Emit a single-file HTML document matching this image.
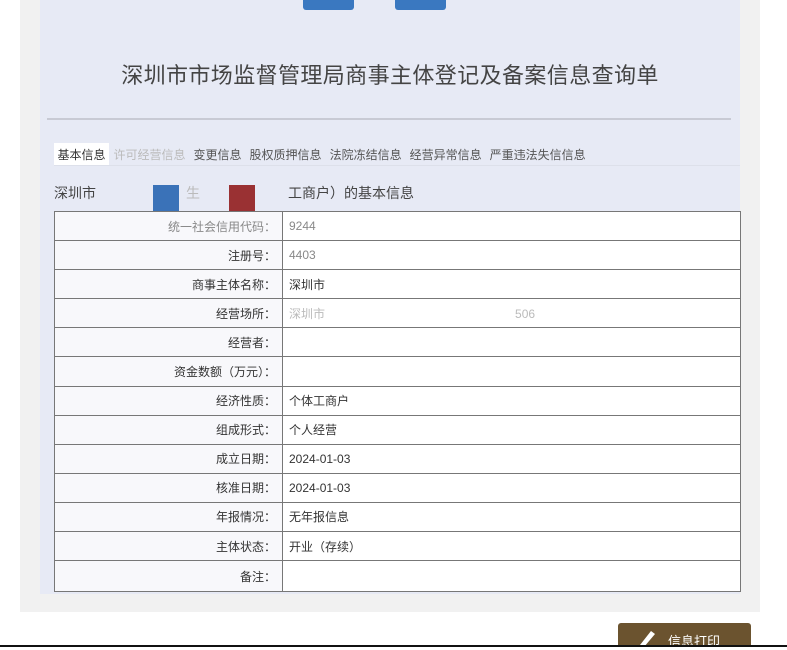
<!DOCTYPE html>
<html><head><meta charset="utf-8"><style>
*{margin:0;padding:0;box-sizing:border-box}
body{width:787px;height:647px;background:#fff;position:relative;overflow:hidden;font-family:"Liberation Sans","Noto Sans CJK SC",sans-serif;color:#333}
.outer{position:absolute;left:20px;top:0;width:740px;height:612px;background:#f1f1f1}
.inner{position:absolute;left:40px;top:0;width:700px;height:594px;background:#e7eaf5}
.btn{position:absolute;top:0;height:10px;width:51px;background:#3a78c0;border-radius:0 0 3px 3px}
.title{position:absolute;left:40px;width:700px;top:58px;text-align:center;font-size:22px;color:#444;letter-spacing:0.4px}
.hr{position:absolute;left:47px;top:118px;width:684px;height:2px;background:#c8cad4}
.tabs{position:absolute;left:54px;top:143px;font-size:12px;color:#555;white-space:nowrap}
.tabs span{display:inline-block;padding:3px 3.5px;margin-right:1px}
.tabs span.a{background:#fff;color:#333}
.tabline{position:absolute;left:54px;top:165px;width:686px;height:1px;background:#dde0ea}
.sub{position:absolute;left:54px;top:183px;font-size:14px;color:#444;white-space:nowrap}
.sq{position:absolute;top:2px;width:26px;height:26px}
table{position:absolute;left:54px;top:211px;width:687px;border-collapse:collapse;background:#fff;font-size:12px}
td{border:1px solid #777;height:29.1px;padding:0 6px}
td.l{width:228px;text-align:right;background:#f8f8fb}
.pb{position:absolute;left:618px;top:623px;width:133px;height:24px;background:#6b532f;border-radius:3px 3px 0 0;color:#fff;font-size:13px;padding:8px 0 0 50px}
.bl{position:absolute;left:0;top:645px;width:787px;height:2px;background:#111}
</style></head><body>
<div class="outer"></div>
<div class="inner"></div>
<div class="btn" style="left:303px"></div>
<div class="btn" style="left:395px"></div>
<div class="title">深圳市市场监督管理局商事主体登记及备案信息查询单</div>
<div class="hr"></div>
<div class="tabs"><span class="a">基本信息</span><span style="color:#bbb">许可经营信息</span><span>变更信息</span><span>股权质押信息</span><span>法院冻结信息</span><span>经营异常信息</span><span>严重违法失信信息</span></div>
<div class="tabline"></div>
<div class="sub" style="width:400px;height:30px">深圳市
<span class="sq" style="left:99px;background:#3a72b8"></span>
<span style="position:absolute;left:132px;top:0;color:#bbb">生</span>
<span class="sq" style="left:175px;background:#9a3133"></span>
<span style="position:absolute;left:234px;top:0">工商户）的基本信息</span></div>
<table>
<tr><td class="l" style="color:#888">统一社会信用代码：</td><td style="color:#888">9244</td></tr>
<tr><td class="l">注册号：</td><td style="color:#888">4403</td></tr>
<tr><td class="l">商事主体名称：</td><td>深圳市</td></tr>
<tr><td class="l">经营场所：</td><td style="color:#bbb">深圳市<span style="margin-left:190px">506</span></td></tr>
<tr><td class="l">经营者：</td><td></td></tr>
<tr><td class="l">资金数额（万元）：</td><td></td></tr>
<tr><td class="l">经济性质：</td><td>个体工商户</td></tr>
<tr><td class="l">组成形式：</td><td>个人经营</td></tr>
<tr><td class="l">成立日期：</td><td>2024-01-03</td></tr>
<tr><td class="l">核准日期：</td><td>2024-01-03</td></tr>
<tr><td class="l">年报情况：</td><td>无年报信息</td></tr>
<tr><td class="l">主体状态：</td><td>开业（存续）</td></tr>
<tr><td class="l" style="height:31px">备注：</td><td></td></tr>
</table>
<div class="pb"><svg style="position:absolute;left:18px;top:4px" width="22" height="20" viewBox="0 0 22 20"><path d="M4 18 L15 4 L19 7 L8 20 Z" fill="#fff"/></svg>信息打印</div>
<div class="bl"></div>
</body></html>
